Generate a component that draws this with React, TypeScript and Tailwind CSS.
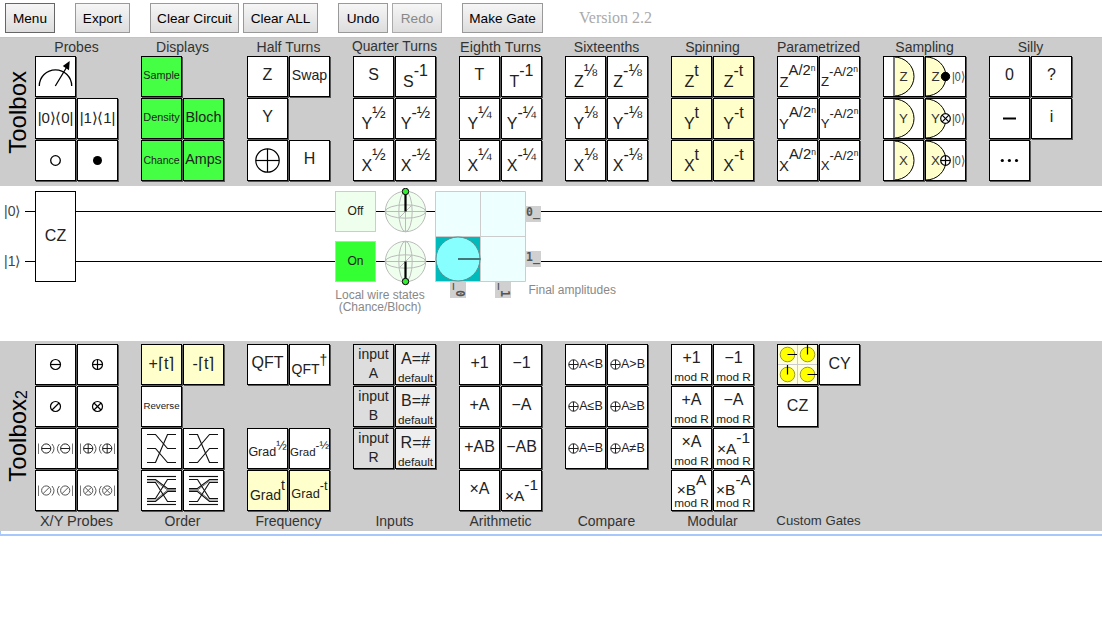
import React from "react";

type Cell = React.ReactNode;

const WHITE = "bg-white";
const YELLOW = "bg-[#ffffcc]";
const GREEN = "bg-[#44ff44]";

function Box({ bg = WHITE, children }: { bg?: string; children?: React.ReactNode }) {
  return (
    <div className={`flex h-[41px] w-[41px] justify-center overflow-visible whitespace-nowrap border border-black leading-none text-[#222] shadow-[1px_1px_0_#555] ${bg}`}>
      {children}
    </div>
  );
}

/* A gate with one centred label. */
function T({ s, size = "text-[16px]", bg, pad = "pb-[3px]" }: { s: string; size?: string; bg?: string; pad?: string }) {
  return (
    <Box bg={bg}>
      <span className={`flex shrink-0 items-center ${size} ${pad}`}>{s}</span>
    </Box>
  );
}

/* A gate whose label has an exponent. */
function P({
  s,
  e,
  size = "text-[16px]",
  tiny,
  bg,
  base = "mt-[17px]",
  exp = "mt-[6px]",
  foot,
}: {
  s: string;
  e: string;
  size?: string;
  tiny?: string;
  bg?: string;
  base?: string;
  exp?: string;
  foot?: string;
}) {
  return (
    <Box bg={bg}>
      <div className="flex shrink-0 flex-col items-center">
        <div className={`flex h-[27px] shrink-0 items-start ${size}`}>
          <span className={base}>{s}</span>
          <span className={exp}>
            {e}
            {tiny && <span className="text-[8.5px] align-[4px]">{tiny}</span>}
          </span>
        </div>
        {foot && <span className="text-[11.8px]">{foot}</span>}
      </div>
    </Box>
  );
}

/* A gate with two stacked lines. */
function Two({ a, b, bg, sa = "text-[16px] mt-[5px]", sb = "text-[11.8px] mt-[6px]" }: { a: string; b: string; bg?: string; sa?: string; sb?: string }) {
  return (
    <Box bg={bg}>
      <div className="flex shrink-0 flex-col items-center">
        <span className={sa}>{a}</span>
        <span className={sb}>{b}</span>
      </div>
    </Box>
  );
}

/* A gate whose face is a drawing in outer-box coordinates. */
function Art({ bg, children }: { bg?: string; children: React.ReactNode }) {
  return (
    <Box bg={bg}>
      <svg className="-m-px h-[41px] w-[41px] shrink-0" viewBox="0 0 41 41" fill="none" stroke="#000">
        {children}
      </svg>
    </Box>
  );
}

function Sign({ kind, x = 20.5, y = 20.5, r = 5, w = 1.2 }: { kind: "-" | "+" | "/" | "x"; x?: number; y?: number; r?: number; w?: number }) {
  const d = r * 0.707;
  return (
    <g strokeWidth={w}>
      <circle cx={x} cy={y} r={r} />
      {(kind === "-" || kind === "+") && <path d={`M${x - r} ${y}H${x + r}`} />}
      {kind === "+" && <path d={`M${x} ${y - r}V${y + r}`} />}
      {(kind === "/" || kind === "x") && <path d={`M${x - d} ${y + d}L${x + d} ${y - d}`} />}
      {kind === "x" && <path d={`M${x - d} ${y - d}L${x + d} ${y + d}`} />}
    </g>
  );
}

function KetBra({ kind }: { kind: "-" | "+" | "/" | "x" }) {
  const soft = kind === "/" || kind === "x";
  return (
    <Art>
      <g stroke={soft ? "#555" : "#222"}>
        <Sign kind={kind} x={11.2} y={20.5} r={4.6} w={1} />
        <Sign kind={kind} x={30.2} y={20.5} r={4.6} w={1} />
      </g>
      <path d="M3.5 15.5V26M37.5 15.5V26" stroke="#777" />
      <path d="M17 16Q21 20.7 17 25.5M24.4 16Q20.4 20.7 24.4 25.5" stroke="#555" />
    </Art>
  );
}

function Detector({ letter }: { letter: string }) {
  return (
    <Art>
      <path d="M11 1A20 19.5 0 0 1 11 40Z" fill="#ffffcc" stroke="none" />
      <path d="M11 1A20 19.5 0 0 1 11 40" />
      <path d="M11 1V40" stroke="#777" strokeWidth="2" />
      <text x="20.5" y="24.7" textAnchor="middle" fontSize="13.3" fill="#333" stroke="none">{letter}</text>
    </Art>
  );
}

function Resetter({ letter, kind }: { letter: string; kind: "dot" | "x" | "+" }) {
  return (
    <Art>
      <path d="M1 1A20 19.5 0 0 1 1 40Z" fill="#ffffcc" stroke="none" />
      <path d="M1 1A20 19.5 0 0 1 1 40" />
      <text x="10.5" y="24.7" textAnchor="middle" fontSize="13.3" fill="#333" stroke="none">{letter}</text>
      {kind === "dot" ? (
        <circle cx="20.5" cy="20.5" r="4.2" fill="#000" />
      ) : (
        <g fill="#fff">
          <Sign kind={kind} r={4.8} />
        </g>
      )}
      <text x="27" y="24.5" fontSize="12.5" fill="#444" stroke="none" textLength="13" lengthAdjust="spacingAndGlyphs">|0⟩</text>
    </Art>
  );
}

const CYCLE = [[6.5, 20.5], [20.5, 34.5], [34.5, 6.5]];
const WEAVE = [[6.5, 6.5], [9.5, 18.5], [12.5, 31.5], [28.5, 9.5], [31.5, 21.5], [34.5, 34.5]];
const WEAVE_INNER = [[11, 20], [30, 20]];

function Strands({ pairs, inner = [], flip }: { pairs: number[][]; inner?: number[][]; flip?: boolean }) {
  return (
    <Art>
      <g transform={flip ? "translate(41 0) scale(-1 1)" : undefined} stroke="#111">
        {pairs.map(([a, b], i) => (
          <path key={i} d={`M6 ${a}H14.5L26.5 ${b}H35`} strokeWidth="1.15" />
        ))}
        {inner.map(([a, b], i) => (
          <path key={`n${i}`} d={`M6 ${a}H14.5L26.5 ${b}H35`} strokeWidth="0.6" />
        ))}
      </g>
    </Art>
  );
}

interface Group {
  name: string;
  size?: string;
  cells: Cell[];
}

const pow = (l: string, e: string, bg?: string) => [<P s={l} e={e} bg={bg} />, <P s={l} e={`-${e}`} bg={bg} />];
const param = (l: string) => [
  <P s={l} e="A/2" tiny="n" size="text-[14.8px]" exp="mt-[6px]" base="mt-[18px]" />,
  <P s={l} e="-A/2" tiny="n" size="text-[13.2px]" exp="mt-[8px]" base="mt-[18px]" />,
];

const TOP: Group[] = [
  {
    name: "Probes",
    cells: [
      <Art>
        <path d="M4.3 30A16.2 16.2 0 0 1 36.7 30M20.3 30L31.5 11.5" strokeWidth="1.3" />
        <path d="M34.7 5L27.8 10L34 14.3Z" fill="#000" stroke="none" />
      </Art>,
      null,
      <T s="|0⟩⟨0|" size="text-[15px] tracking-[-0.2px]" />,
      <T s="|1⟩⟨1|" size="text-[15px] tracking-[-0.2px]" />,
      <Art><circle cx="20.5" cy="20.5" r="4.8" strokeWidth="1.3" /></Art>,
      <Art><circle cx="20.5" cy="20.5" r="4.5" fill="#000" stroke="none" /></Art>,
    ],
  },
  {
    name: "Displays",
    cells: [
      <T s="Sample" size="text-[10.8px]" bg={GREEN} />,
      null,
      <T s="Density" size="text-[10.9px]" bg={GREEN} />,
      <T s="Bloch" size="text-[14.4px]" bg={GREEN} />,
      <T s="Chance" size="text-[10.5px]" bg={GREEN} pad="pb-[1px]" />,
      <T s="Amps" size="text-[14.3px]" bg={GREEN} />,
    ],
  },
  {
    name: "Half Turns",
    cells: [
      <T s="Z" />,
      <T s="Swap" size="text-[14.2px]" />,
      <T s="Y" />,
      null,
      <Art><Sign kind="+" r={11.7} w={1.2} /></Art>,
      <T s="H" />,
    ],
  },
  { name: "Quarter Turns", size: "text-[13.8px]", cells: [<T s="S" />, <P s="S" e="-1" />, ...pow("Y", "½"), ...pow("X", "½")] },
  { name: "Eighth Turns", size: "text-[14.4px]", cells: [<T s="T" />, <P s="T" e="-1" />, ...pow("Y", "¼"), ...pow("X", "¼")] },
  { name: "Sixteenths", cells: [...pow("Z", "⅛"), ...pow("Y", "⅛"), ...pow("X", "⅛")] },
  { name: "Spinning", cells: [...pow("Z", "t", YELLOW), ...pow("Y", "t", YELLOW), ...pow("X", "t", YELLOW)] },
  { name: "Parametrized", cells: [...param("Z"), ...param("Y"), ...param("X")] },
  {
    name: "Sampling",
    cells: [
      <Detector letter="Z" />,
      <Resetter letter="Z" kind="dot" />,
      <Detector letter="Y" />,
      <Resetter letter="Y" kind="x" />,
      <Detector letter="X" />,
      <Resetter letter="X" kind="+" />,
    ],
  },
  {
    name: "Silly",
    cells: [
      <T s="0" />,
      <T s="?" />,
      <Art><path d="M14 20.5H27" strokeWidth="2" /></Art>,
      <T s="i" />,
      <Art>
        <g fill="#000" stroke="none">
          <circle cx="13.3" cy="20.5" r="1.6" />
          <circle cx="20.4" cy="20.5" r="1.6" />
          <circle cx="27.5" cy="20.5" r="1.6" />
        </g>
      </Art>,
    ],
  },
];

const inputRow = (l: string) => [
  <Two a="input" b={l} bg="bg-[#dddddd]" sa="text-[14px] mt-[2px]" sb="text-[14px] mt-[5px]" />,
  <Two a={`${l}=#`} b="default" bg="bg-[#eeeeee]" sa="text-[16px] mt-[6px]" sb="text-[11.7px] mt-[5px]" />,
];

function Cmp({ s }: { s: string }) {
  return (
    <Box>
      <div className="flex shrink-0 items-center text-[12.5px]">
        <svg className="h-[11px] w-[11px]" viewBox="0 0 11 11" fill="none" stroke="#222">
          <Sign kind="+" x={5.5} y={5.5} r={4.7} w={1} />
        </svg>
        <span>{s}</span>
      </div>
    </Box>
  );
}

const BOTTOM: Group[] = [
  {
    name: "X/Y Probes",
    size: "text-[14.5px]",
    cells: [
      <Art><Sign kind="-" /></Art>,
      <Art><Sign kind="+" /></Art>,
      <Art><Sign kind="/" /></Art>,
      <Art><Sign kind="x" /></Art>,
      <KetBra kind="-" />,
      <KetBra kind="+" />,
      <KetBra kind="/" />,
      <KetBra kind="x" />,
    ],
  },
  {
    name: "Order",
    cells: [
      <T s="+⌈t⌉" bg={YELLOW} pad="pb-[2px]" />,
      <T s="-⌈t⌉" bg={YELLOW} pad="pb-[2px]" />,
      <T s="Reverse" size="text-[9.7px]" pad="pb-[1px]" />,
      null,
      <Strands pairs={CYCLE} />,
      <Strands pairs={CYCLE} flip />,
      <Strands pairs={WEAVE} inner={WEAVE_INNER} />,
      <Strands pairs={WEAVE} inner={WEAVE_INNER} flip />,
    ],
  },
  {
    name: "Frequency",
    cells: [
      <T s="QFT" />,
      <P s="QFT" e="†" size="text-[14px]" base="mt-[17px]" exp="mt-[8px]" />,
      null,
      null,
      <P s="Grad" e="½" size="text-[12.5px]" base="mt-[17px]" exp="mt-[11px]" />,
      <P s="Grad" e="-½" size="text-[11.5px]" base="mt-[18px]" exp="mt-[11px]" />,
      <P s="Grad" e="t" size="text-[14px]" base="mt-[17px]" exp="mt-[7px]" bg={YELLOW} />,
      <P s="Grad" e="-t" size="text-[12.8px]" base="mt-[17px]" exp="mt-[9px]" bg={YELLOW} />,
    ],
  },
  { name: "Inputs", cells: [...inputRow("A"), ...inputRow("B"), ...inputRow("R"), null, null] },
  {
    name: "Arithmetic",
    cells: [
      <T s="+1" />, <T s="−1" />,
      <T s="+A" />, <T s="−A" />,
      <T s="+AB" />, <T s="−AB" />,
      <T s="×A" />, <P s="×A" e="-1" size="text-[15.5px]" />,
    ],
  },
  {
    name: "Compare",
    cells: [<Cmp s="A<B" />, <Cmp s="A>B" />, <Cmp s="A≤B" />, <Cmp s="A≥B" />, <Cmp s="A=B" />, <Cmp s="A≠B" />, null, null],
  },
  {
    name: "Modular",
    cells: [
      <Two a="+1" b="mod R" />, <Two a="−1" b="mod R" />,
      <Two a="+A" b="mod R" />, <Two a="−A" b="mod R" />,
      <Two a="×A" b="mod R" />, <P s="×A" e="-1" size="text-[15.5px]" base="mt-[12px]" exp="mt-[1px]" foot="mod R" />,
      <P s="×B" e="A" size="text-[15.5px]" base="mt-[11px]" exp="mt-[1px]" foot="mod R" />,
      <P s="×B" e="-A" size="text-[15.5px]" base="mt-[11px]" exp="mt-[1px]" foot="mod R" />,
    ],
  },
  {
    name: "Custom Gates",
    size: "text-[13.2px]",
    cells: [
      <Art bg="bg-[#ffffdd]">
        <path d="M20.5 1V40M1 20.5H40" stroke="#ccc" />
        <g fill="#ffff00" stroke="#999933">
          <circle cx="10.5" cy="10.5" r="7.3" />
          <circle cx="30.5" cy="10.5" r="7.3" />
          <circle cx="10.5" cy="30.5" r="7.3" />
          <circle cx="30.5" cy="30.5" r="7.3" />
        </g>
        <path d="M10.5 10.5H20M30.5 10.5V1M10.5 30.5V21M30.5 30.5H40" strokeWidth="1.2" />
      </Art>,
      <T s="CY" pad="pb-[1px]" />,
      <T s="CZ" pad="pb-[1px]" />,
      null, null, null, null, null,
    ],
  },
];

function Cells({ cells }: { cells: Cell[] }) {
  return (
    <div className="grid auto-rows-[42px] grid-cols-[42px_42px]">
      {cells.map((c, i) => (
        <div key={i}>{c}</div>
      ))}
    </div>
  );
}

function Label({ name, size = "text-[14px]" }: { name: string; size?: string }) {
  return <div className={`flex w-[83px] justify-center whitespace-nowrap leading-[16px] text-[#333] ${size}`}>{name}</div>;
}

function Button({ s, w, tone = "border-[#999] text-black" }: { s: string; w: string; tone?: string }) {
  return (
    <button className={`h-[30px] shrink-0 whitespace-nowrap border bg-linear-to-b from-[#f6f6f6] to-[#dddddd] pt-[2px] text-[13.6px] leading-none ${tone} ${w}`}>
      {s}
    </button>
  );
}

function Bloch({ down, pos }: { down?: boolean; pos: string }) {
  const y = down ? 43.5 : 3.5;
  return (
    <svg className={`absolute h-[48px] w-[43px] ${pos}`} viewBox="0 0 43 48" fill="none" stroke="#bbb">
      <circle cx="21.5" cy="23.5" r="20.2" fill="#eeffee" />
      <ellipse cx="21.5" cy="23.5" rx="20.2" ry="6.7" />
      <ellipse cx="21.5" cy="23.5" rx="6.7" ry="20.2" />
      <path d="M1.3 23.5H41.7M21.5 3.3V43.7M15.5 29.5L27.5 17.5" />
      <path d={`M21.5 23.5V${y}`} stroke="#000" strokeWidth="2.2" />
      <circle cx="21.5" cy={y} r="3.2" fill="#33ee33" stroke="#000" />
    </svg>
  );
}

function Tag({ s, pos }: { s: string; pos: string }) {
  return (
    <div className={`absolute flex h-[16px] w-[16px] items-center justify-center bg-[#d0d0d0] pb-[2px] font-['DejaVu_Sans_Mono',monospace] text-[11.5px] font-bold leading-none text-[#555] ${pos}`}>
      {s}
    </div>
  );
}

function Circuit() {
  return (
    <div className="relative h-[155px] overflow-hidden bg-white">
      <div className="absolute left-[25px] right-0 top-[25px] h-px bg-black" />
      <div className="absolute left-[25px] right-0 top-[75px] h-px bg-black" />
      <div className="absolute left-[4px] top-[17px] text-[14px] leading-[16px] text-[#444]">|0⟩</div>
      <div className="absolute left-[4px] top-[67px] text-[14px] leading-[16px] text-[#444]">|1⟩</div>
      <div className="absolute left-[35px] top-[5px] flex h-[91px] w-[41px] items-center justify-center border border-black bg-white pb-[2px] text-[16px] leading-none text-[#222]">
        CZ
      </div>
      <div className="absolute left-[335px] top-[5px] flex h-[41px] w-[41px] items-center justify-center border border-[#ccc] bg-[#eeffee] pb-[2px] text-[12px] leading-none text-[#222]">
        Off
      </div>
      <div className="absolute left-[335px] top-[55px] flex h-[41px] w-[41px] items-center justify-center border border-[#ccc] bg-[#33ff33] pb-[2px] text-[12px] leading-none text-[#222]">
        On
      </div>
      <Bloch pos="left-[384px] top-[2px]" />
      <Bloch down pos="left-[384px] top-[52px]" />
      <svg className="absolute left-[435px] top-[5px] h-[91px] w-[91px]" viewBox="0 0 91 91" fill="none">
        <rect x="0" y="0" width="91" height="91" fill="#eeffff" />
        <rect x="0.5" y="45.5" width="45" height="45" fill="#00bbbb" />
        <path d="M0.5 0.5H90.5V90.5H0.5ZM45.5 0V91M0 45.5H91" stroke="#ccc" />
        <circle cx="23" cy="68" r="22" fill="#88ffff" stroke="#5a8f8f" />
        <path d="M23 68H45.5" stroke="#447777" strokeWidth="2" />
      </svg>
      <Tag s="0_" pos="left-[525px] top-[20px]" />
      <Tag s="1_" pos="left-[525px] top-[65px]" />
      <Tag s="_0" pos="left-[450px] top-[96px] rotate-90" />
      <Tag s="_1" pos="left-[495px] top-[96px] rotate-90" />
      <div className="absolute left-[320px] top-[103px] w-[120px] text-center text-[12px] leading-[12px] text-[#888]">
        Local wire states
        <br />
        (Chance/Bloch)
      </div>
      <div className="absolute left-[528.5px] top-[97px] whitespace-nowrap text-[12px] leading-[14px] text-[#888]">Final amplitudes</div>
    </div>
  );
}

function Side({ children, h }: { children: React.ReactNode; h: string }) {
  return (
    <div className={`flex w-[35px] shrink-0 items-center justify-center text-[24px] leading-none text-black ${h}`}>
      <span className="rotate-180 whitespace-nowrap [writing-mode:vertical-rl]">{children}</span>
    </div>
  );
}

export default function App() {
  return (
    <div className="flex h-[624px] w-[1102px] flex-col overflow-hidden bg-white font-['Liberation_Sans',Arial,sans-serif]">
      <header className="flex h-[37px] shrink-0 items-start pl-[5px] pt-[3px]">
        <Button s="Menu" w="w-[50px]" tone="border-[#666] text-black" />
        <div className="ml-[20px] flex"><Button s="Export" w="w-[55px]" /></div>
        <div className="ml-[20px] flex gap-[4px]">
          <Button s="Clear Circuit" w="w-[89px]" />
          <Button s="Clear ALL" w="w-[75px]" />
        </div>
        <div className="ml-[20px] flex gap-[4px]">
          <Button s="Undo" w="w-[50px]" />
          <Button s="Redo" w="w-[50px]" tone="border-[#aaa] text-[#888]" />
        </div>
        <div className="ml-[20px] flex"><Button s="Make Gate" w="w-[81px]" /></div>
        <span className="ml-[36px] mt-[6px] font-['Liberation_Serif',serif] text-[16px] leading-[18px] text-[#aaa]">Version 2.2</span>
      </header>
      <main className="flex h-[499px] shrink-0 flex-col border-y border-b-2 border-[#a8c7fa]">
        <section className="flex h-[148px] shrink-0 bg-[#cccccc]">
          <Side h="h-[148px]">Toolbox</Side>
          <div className="flex gap-[22px]">
            {TOP.map((g) => (
              <div key={g.name} className="flex w-[84px] flex-col">
                <div className="h-[18px] pt-[1px]"><Label name={g.name} size={g.size} /></div>
                <Cells cells={g.cells} />
              </div>
            ))}
          </div>
        </section>
        <Circuit />
        <section className="flex h-[190px] shrink-0 bg-[#cccccc]">
          <Side h="h-[190px]">
            Toolbox<span className="text-[16px] align-[-4px]">2</span>
          </Side>
          <div className="flex gap-[22px] pt-[3px]">
            {BOTTOM.map((g) => (
              <div key={g.name} className="flex w-[84px] flex-col">
                <Cells cells={g.cells} />
                <div className="pt-[1px]"><Label name={g.name} size={g.size} /></div>
              </div>
            ))}
          </div>
        </section>
        <div className="h-[3px] shrink-0 border-l border-[#a8c7fa] bg-white" />
      </main>
    </div>
  );
}
